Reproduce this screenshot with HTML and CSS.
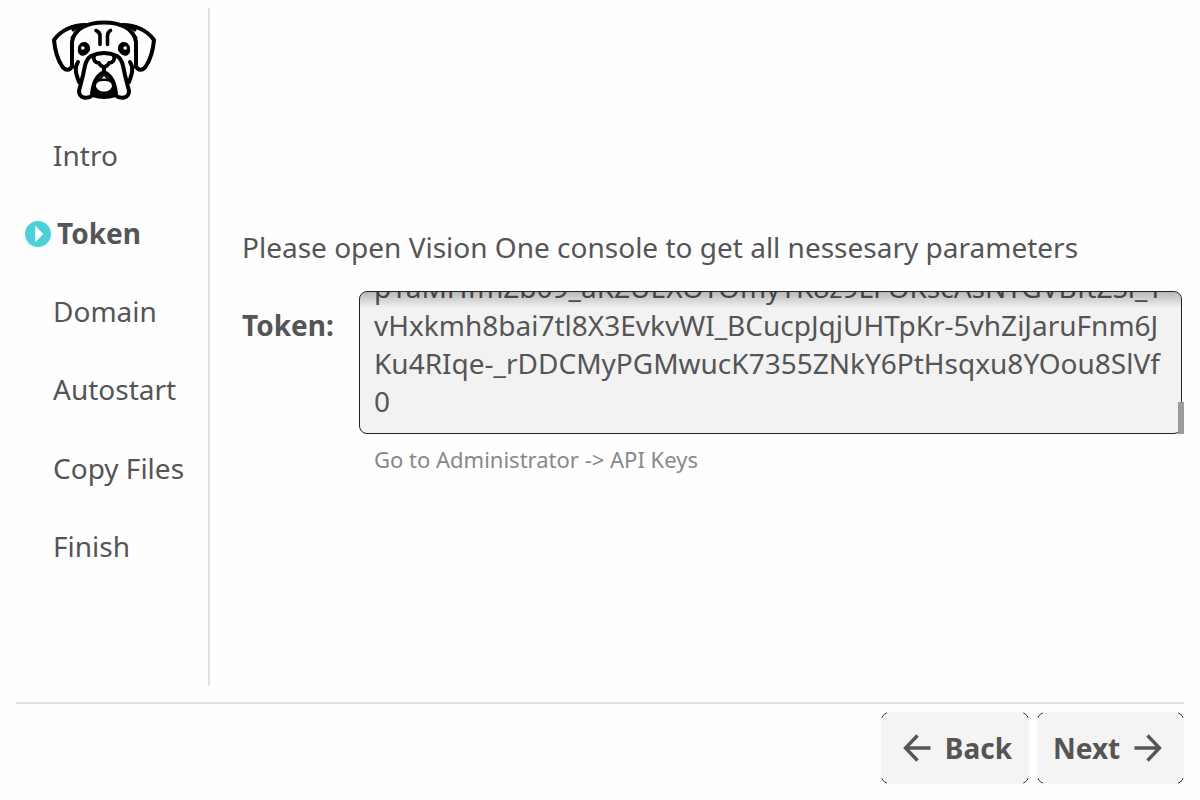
FILE: index.html
```html
<!DOCTYPE html>
<html lang="en">
<head>
<meta charset="utf-8">
<title>Setup</title>
<link rel="stylesheet" href="styles.css">
</head>
<body>
<div class="top">
  <nav class="sidebar">
    <svg class="logo" viewBox="0 0 130 100" width="130" height="100" fill="none" stroke="#000" stroke-width="4" stroke-linecap="round" stroke-linejoin="round">
      <path d="M32 57 L32 32 C34 18 48 12.500 64 12.500 C80 12.500 94 18 96 32 L96 57"/>
      <path d="M45 15 C33 15 21 20 14 30 C15 41 18 50 22 56 C25 61 30 61 32 56 M83 15 C95 15 107 20 114 30 C113 41 110 50 106 56 C103 61 98 61 96 56"/>
      <path stroke-width="3" d="M41 17 L32 28 M38 16 L33 20 M87 17 L96 28 M90 16 L95 20"/>
      <path stroke-width="3.600" d="M56 20.500 Q60 22 60 26 V34.500 M70.500 20.500 Q67.500 22 67.500 26 V34.500"/>
      <path d="M38 52 C34 58 36 64 39 72 M90 52 C94 58 92 64 89 72"/>
      <path d="M53 85 C47 90 39 88 39 81 L42 69 C45 60 44 50 51 46 Q64 40 77 46 C84 50 83 60 86 69 L89 81 C89 88 81 90 75 85 Q64 89 53 85"/>
      <path stroke-width="3.800" d="M54 46 C53 50 55 52.500 59 53 Q61 57 64 57 Q67 57 69 53 C73 52.500 75 50 74 46"/>
      <path d="M64 57 V62 C57 65 53 73 52 84 M64 62 C71 65 75 73 76 84"/>
      <path fill="#000" stroke-width="2" d="M64 65 L55 73 V83 L60 84 H68 L73 83 V73 Z"/>
      <path fill="#fff" stroke="none" d="M56 76 C56.500 71.500 60 71 64 71 C68 71 71.500 71.500 72 76 C71.500 79.500 68 81.500 64 81.500 C60 81.500 56.500 79.500 56 76 Z M61.500 68.500 H66.500 L64 66 Z"/>
      <path fill="#000" stroke-width="1" d="M38.500 41 C37.500 35 41 32 45 32.500 C49 33 50 37 49.500 40 C48 44 44 46 41 45 C39.500 44.500 38.500 43 38.500 41 Z M89.500 41 C90.500 35 87 32 83 32.500 C79 33 78 37 78.500 40 C80 44 84 46 87 45 C88.500 44.500 89.500 43 89.500 41 Z"/>
      <path fill="#fff" stroke="none" d="M41 38 A1.800 1.800 0 1 0 44.600 38 A1.800 1.800 0 1 0 41 38 M83.400 38 A1.800 1.800 0 1 0 87 38 A1.800 1.800 0 1 0 83.400 38"/>
    </svg>
    <ul class="steps">
      <li>Intro</li>
      <li class="current"><svg class="marker" width="26" height="26" viewBox="0 0 26 26"><circle cx="13" cy="13" r="13" fill="#4dd0d9"/><path d="M10.200 4.800V21.200L18.300 13Z" fill="#fff"/></svg>Token</li>
      <li>Domain</li>
      <li>Autostart</li>
      <li>Copy Files</li>
      <li>Finish</li>
    </ul>
  </nav>
  <main class="content">
    <p class="intro">Please open Vision One console to get all nessesary parameters</p>
    <div class="field">
      <span class="label">Token:</span>
      <div class="input-wrap">
        <div class="input">
          <div class="lines">
            <div class="line">pYaMHfmZb09_aKZUEXOTOmyTK8z9LFOKscAsNTGVBftZSl_T</div>
            <div class="line">vHxkmh8bai7tl8X3EvkvWI_BCucpJqjUHTpKr-5vhZiJaruFnm6J</div>
            <div class="line">Ku4RIqe-_rDDCMyPGMwucK7355ZNkY6PtHsqxu8YOou8SlVf</div>
            <div class="line">0</div>
          </div>
        </div>
        <div class="thumb"></div>
      </div>
    </div>
    <p class="hint">Go to Administrator -&gt; API Keys</p>
  </main>
</div>
<footer class="footer">
  <button class="btn"><svg width="28" height="28" viewBox="0 0 28 28"><path d="M14.500 1.500L2.500 14L14.500 26.500M2.500 14H27.500"/></svg><span>Back</span></button>
  <button class="btn next"><span>Next</span><svg width="28" height="28" viewBox="0 0 28 28"><path d="M13.500 1.500L25.500 14L13.500 26.500M25.500 14H0.500"/></svg></button>
</footer>
</body>
</html>
```
FILE: styles.css
```css
* { box-sizing: border-box; }
body {
  margin: 0; width: 1200px; height: 800px; overflow: hidden;
  padding: 8px 16px 16px; background: #fefefe; color: #555;
  font: 28px/38px "Noto Sans", sans-serif;
  display: flex; flex-direction: column;
}
p, ul { margin: 0; padding: 0; }
.top { height: 678px; display: flex; }
.sidebar { width: 194px; border-right: 2px solid #e0e0e0; }
.logo { display: block; margin: 2px 0 0 24px; }
.steps { list-style: none; padding: 26px 0 0 37px; display: flex; flex-direction: column; gap: 40.150px; }
.steps li { white-space: nowrap; }
.steps .current { font-weight: 700; margin-left: -28px; display: flex; align-items: center; gap: 6px; }
.marker { margin-top: 2px; }
.content { padding: 220px 0 0 32px; width: 974px; }
.intro { white-space: nowrap; }
.field { display: flex; margin-top: 25px; }
.label { width: 117px; font-weight: 700; padding-top: 15px; }
.input-wrap { position: relative; width: 825px; }
.input {
  position: relative; width: 823px; height: 143px; overflow: hidden;
  border: 1px solid #222; border-radius: 8px; background: #f2f2f2;
  padding-left: 14px;
}
.input::before {
  content: ""; position: absolute; inset: 0 0 auto; height: 16px;
  background: linear-gradient(rgba(0,0,0,.24), rgba(0,0,0,0));
}
.lines { margin-top: -24px; }
.line { height: 38px; white-space: nowrap; }
.thumb { position: absolute; right: 0; bottom: 0; width: 6px; height: 32px; background: #9b9b9b; }
.hint { margin: 10px 0 0 132px; font-size: 22px; line-height: 30px; color: #888; }
.footer { margin-top: 16px; border-top: 2px solid #e0e0e0; padding-top: 8px; display: flex; justify-content: flex-end; gap: 8px; }
.btn {
  position: relative;
  width: 148px; height: 72px; padding: 0 17px 0 22px; border: 0; border-radius: 8px;
  background: #f4f4f4; color: #555; font: 700 28px/38px "Noto Sans", sans-serif;
  display: flex; align-items: center; justify-content: space-between;
}
/* dark outline that shows only at the four rounded corners */
.btn::after {
  content: ""; position: absolute; inset: 0; border: 1px solid #222; border-radius: 8px;
  mask:
    linear-gradient(#000 0 0) 0 0 / 6px 6px no-repeat,
    linear-gradient(#000 0 0) 100% 0 / 6px 6px no-repeat,
    linear-gradient(#000 0 0) 0 100% / 6px 6px no-repeat,
    linear-gradient(#000 0 0) 100% 100% / 6px 6px no-repeat;
}
.next { width: 147px; padding: 0 22px 0 16px; }
.btn path { fill: none; stroke: #555; stroke-width: 3.300; }
```
